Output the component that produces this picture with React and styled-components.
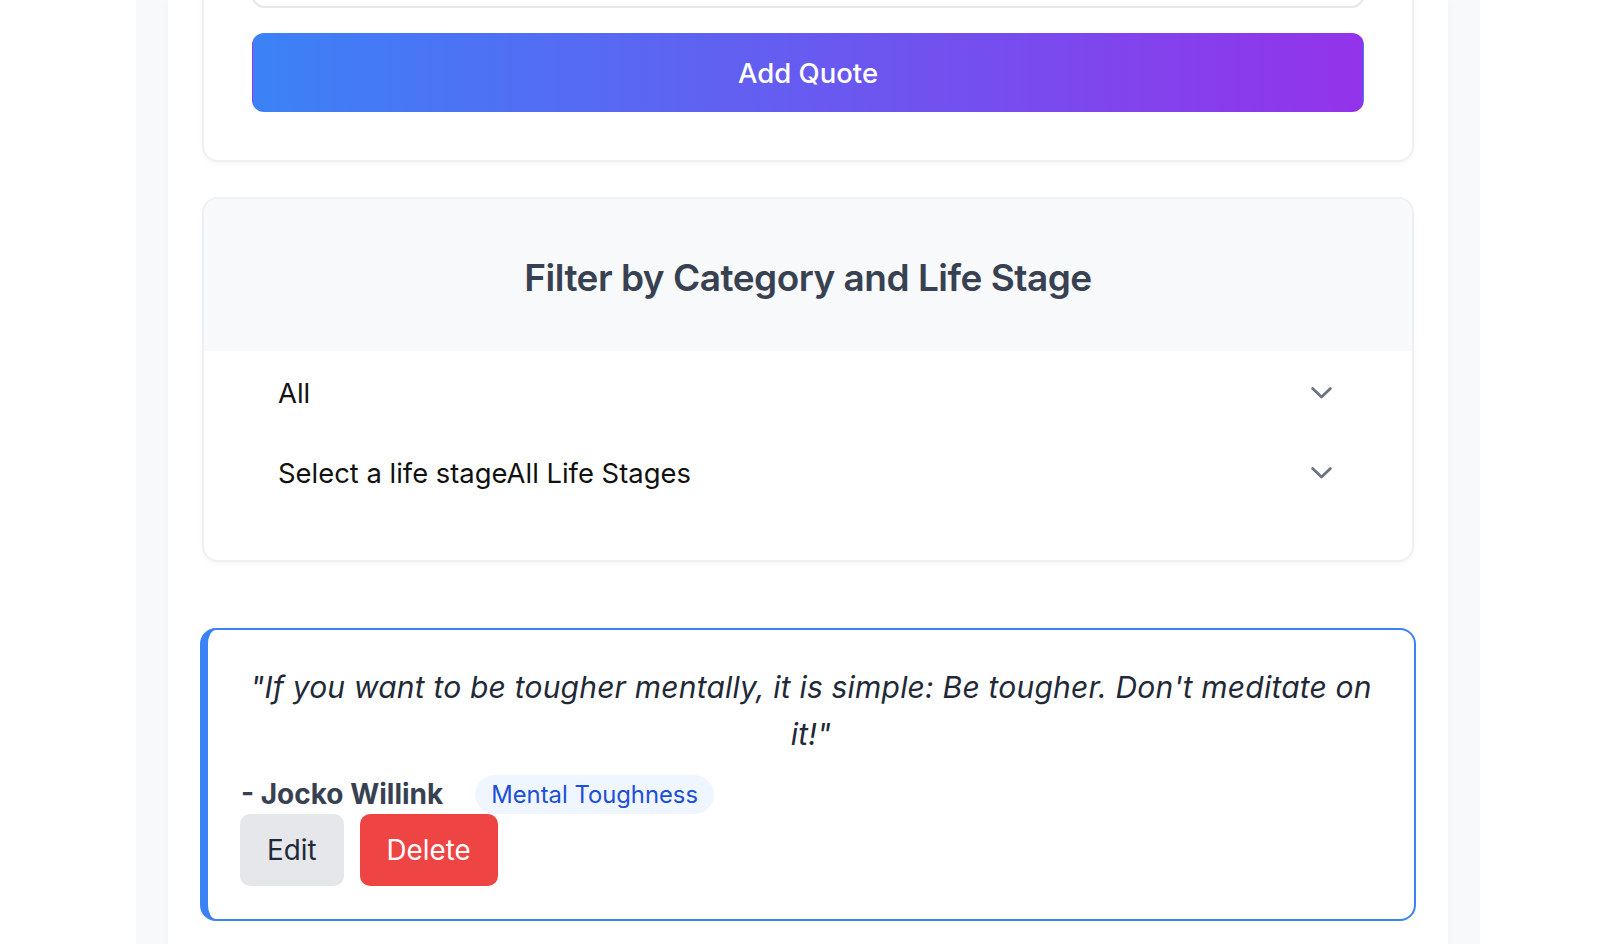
import React from "react";
import styled, { createGlobalStyle } from "styled-components";

const GlobalStyle = createGlobalStyle`
  html, body { margin: 0; padding: 0; background: #ffffff; }
  body {
    font-family: Inter, "Noto Sans", "Liberation Sans", sans-serif;
    color: #111827;
    overflow: hidden;
  }
  * { box-sizing: border-box; }
`;

const Shell = styled.div`
  padding-left: 6px;
  min-height: 100vh;
`;

const Page = styled.div`
  max-width: 1344px;
  margin: 0 auto;
  min-height: 100vh;
  background: #f8f9fa;
  padding: 0 32px;
  display: flex;
`;

const Main = styled.main`
  flex: 1;
  background: #ffffff;
  padding: 0 34px 40px;
  display: flex;
  flex-direction: column;
  box-shadow: 0 0 10px rgba(17, 24, 39, 0.035);
`;

const Card = styled.section`
  background: #ffffff;
  border: 2px solid #eff0f3;
  border-radius: 16px;
  box-shadow: 0 2px 4px rgba(17, 24, 39, 0.04);
  overflow: hidden;
`;

const FormCard = styled(Card)`
  margin-top: -112px;
  padding: 48px;
  display: flex;
  flex-direction: column;
  gap: 25px;
`;

const Input = styled.div`
  height: 70px;
  border: 2px solid #e5e7eb;
  border-radius: 12px;
  background: #ffffff;
`;

const PrimaryButton = styled.button`
  height: 79px;
  border: 1.5px solid transparent;
  border-radius: 12px;
  background: linear-gradient(to right, #3b82f6, #9333ea);
  color: #ffffff;
  font-family: inherit;
  font-size: 27.5px;
  font-weight: 500;
  cursor: pointer;
`;

const FilterCard = styled(Card)`
  margin-top: 35px;
`;

const FilterHeader = styled.header`
  height: 152px;
  padding-top: 4px;
  background: #f8f9fb;
  display: flex;
  align-items: center;
  justify-content: center;
`;

const FilterTitle = styled.h2`
  margin: 0;
  font-size: 37px;
  font-weight: 600;
  letter-spacing: -0.5px;
  color: #374151;
`;

const FilterBody = styled.div`
  padding: 10px 40px 55px;
  display: flex;
  flex-direction: column;
  gap: 16px;
`;

const SelectRow = styled.div`
  height: 64px;
  padding: 0 40px 0 34px;
  display: flex;
  align-items: center;
  justify-content: space-between;
  font-size: 27.4px;
  color: #111111;
`;

const Chevron = () => (
  <svg width="21" height="12" viewBox="0 0 21 12" fill="none">
    <path
      d="M1.6 1.6 L10.5 10 L19.4 1.6"
      stroke="#6b7280"
      strokeWidth="2.8"
      strokeLinecap="round"
      strokeLinejoin="round"
    />
  </svg>
);

const QuoteCard = styled.article`
  margin: 66px -2px 0;
  border: 2px solid #3b82f6;
  border-left-width: 8px;
  border-radius: 16px;
  background: #ffffff;
  padding: 34px 32px 33px;
  display: flex;
  flex-direction: column;
`;

const QuoteText = styled.p`
  margin: 0 0 16px;
  font-size: 30px;
  letter-spacing: 0.2px;
  font-style: italic;
  line-height: 47px;
  text-align: center;
  color: #1f2937;
`;

const MetaRow = styled.div`
  display: flex;
  align-items: center;
  gap: 32px;
  height: 40px;
`;

const Author = styled.span`
  font-size: 28px;
  font-weight: 700;
  color: #374151;
  padding-left: 1px;
`;

const Badge = styled.span`
  display: inline-flex;
  align-items: center;
  height: 39px;
  padding: 0 16px;
  border-radius: 999px;
  background: #eff6ff;
  color: #1d4ed8;
  font-size: 23.8px;
`;

const Actions = styled.div`
  display: flex;
  gap: 16px;
`;

const ActionButton = styled.button`
  height: 72px;
  padding: 0 27px;
  border: none;
  border-radius: 10px;
  font-family: inherit;
  font-size: 27.8px;
  background: ${(p) => (p.$danger ? "#ef4444" : "#e5e7eb")};
  color: ${(p) => (p.$danger ? "#ffffff" : "#1f2937")};
  cursor: pointer;
`;

export default function App() {
  return (
    <>
      <GlobalStyle />
      <Shell>
        <Page>
          <Main>
            <FormCard>
              <Input />
              <PrimaryButton>Add Quote</PrimaryButton>
            </FormCard>

            <FilterCard>
              <FilterHeader>
                <FilterTitle>Filter by Category and Life Stage</FilterTitle>
              </FilterHeader>
              <FilterBody>
                <SelectRow>
                  <span>All</span>
                  <Chevron />
                </SelectRow>
                <SelectRow>
                  <span>Select a life stageAll Life Stages</span>
                  <Chevron />
                </SelectRow>
              </FilterBody>
            </FilterCard>

            <QuoteCard>
              <QuoteText>
                "If you want to be tougher mentally, it is simple: Be tougher.
                Don't meditate on it!"
              </QuoteText>
              <MetaRow>
                <Author>- Jocko Willink</Author>
                <Badge>Mental Toughness</Badge>
              </MetaRow>
              <Actions>
                <ActionButton>Edit</ActionButton>
                <ActionButton $danger>Delete</ActionButton>
              </Actions>
            </QuoteCard>
          </Main>
        </Page>
      </Shell>
    </>
  );
}
